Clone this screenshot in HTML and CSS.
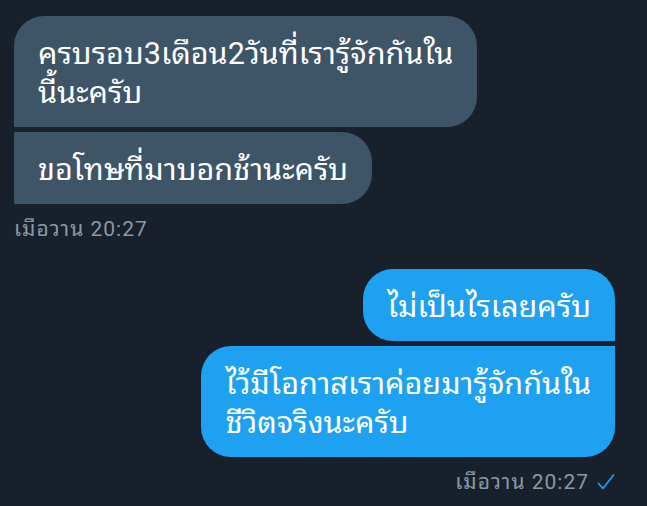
FILE: index.html
```html
<!DOCTYPE html>
<html lang="th">
<head>
<meta charset="utf-8">
<link rel="stylesheet" href="styles.css">
</head>
<body>
<div class="chat">
  <div class="group in">
    <div class="bubble first">ครบรอบ3เดือน2วันที่เรารู้จักกันใน<br>นี้นะครับ</div>
    <div class="bubble last">ขอโทษที่มาบอกช้านะครับ</div>
    <div class="meta">เมือวาน 20:27</div>
  </div>
  <div class="group out">
    <div class="bubble first">ไม่เป็นไรเลยครับ</div>
    <div class="bubble last">ไว้มีโอกาสเราค่อยมารู้จักกันใน<br>ชีวิตจริงนะครับ</div>
    <div class="meta">เมือวาน 20:27 <svg class="check" viewBox="0 0 18 18" width="18" height="18"><path d="M1.5 10.5 L6 15.5 L16.5 2" fill="none" stroke="#1da1f2" stroke-width="1.7" stroke-linecap="round" stroke-linejoin="round"/></svg></div>
  </div>
</div>
</body>
</html>
```
FILE: styles.css
```css
html, body {
  margin: 0;
  padding: 0;
  background: #18212b;
}
body {
  font-family: Roboto, "Noto Sans Thai Looped", "Loma", sans-serif;
  color: #ffffff;
}
.chat {
  display: flex;
  flex-direction: column;
  padding: 16px 32px 0 14px;
}
.group {
  display: flex;
  flex-direction: column;
  gap: 5px;
}
.group.in {
  align-items: flex-start;
}
.group.out {
  align-items: flex-end;
  margin-top: 28px;
}
.bubble {
  font-size: 30.6px;
  line-height: 39px;
  padding: 18px 24px 15px;
  white-space: nowrap;
}
.in .bubble {
  background: #3e5467;
}
.out .bubble {
  background: #1fa1f1;
}
.in .bubble.first {
  border-radius: 30px 30px 30px 0;
}
.in .bubble.last {
  border-radius: 0 30px 30px 0;
}
.out .bubble.first {
  border-radius: 30px 30px 0 30px;
}
.out .bubble.last {
  border-radius: 30px 0 30px 30px;
}
.meta {
  font-size: 21px;
  line-height: 24px;
  letter-spacing: 1px;
  color: #8899a6;
  margin-top: 8px;
  display: flex;
  align-items: center;
  gap: 8px;
}
.check {
  display: block;
}
```
